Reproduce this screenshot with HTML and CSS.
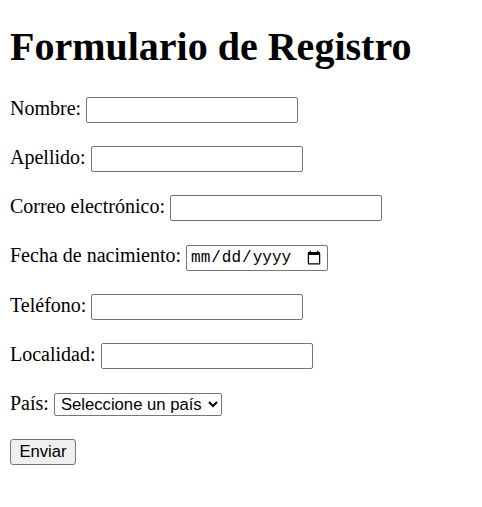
FILE: index.html
```html
<!DOCTYPE html>
<html lang="es">
<head>
<meta charset="utf-8">
<title>Formulario de Registro</title>
<link rel="stylesheet" href="styles.css">
</head>
<body>
<h1 class="title">Formulario de Registro</h1>
<form class="form">
<label for="nombre">Nombre:</label> <input class="field" type="text" id="nombre"><br><br>
<label for="apellido">Apellido:</label> <input class="field" type="text" id="apellido"><br><br>
<label for="correo">Correo electrónico:</label> <input class="field" type="email" id="correo"><br><br>
<label for="fecha">Fecha de nacimiento:</label> <input class="field date" type="date" id="fecha"><br><br>
<label for="tel">Teléfono:</label> <input class="field" type="tel" id="tel"><br><br>
<label for="loc">Localidad:</label> <input class="field" type="text" id="loc"><br><br>
<label for="pais">País:</label> <select class="select" id="pais"><option>Seleccione un país</option></select><br><br>
<input class="button" type="submit" value="Enviar">
</form>
</body>
</html>
```
FILE: styles.css
```css
body {
  margin: 10px;
  font-family: "Liberation Serif", "Times New Roman", serif;
  font-size: 20px;
  color: #000;
  background: #fff;
}
.title {
  font-family: "Liberation Serif", "Times New Roman", serif;
  font-size: 40px;
  font-weight: bold;
  margin: 12.8px 0 27.5px;
}
.field {
  box-sizing: border-box;
  width: 212px;
  height: 26px;
  padding: 0 2.5px;
  border: 1px solid #767676;
  border-radius: 2px;
  font-family: "Liberation Sans", Arial, sans-serif;
  font-size: 16.67px;
  background: #fff;
  color: #000;
}
.date {
  width: 142px;
  padding: 0 3px 0 3px;
  font-family: "Liberation Mono", "Courier New", monospace;
  font-size: 16px;
}
.select {
  box-sizing: border-box;
  width: 168px;
  height: 23px;
  padding: 0 0 0 2px;
  border: 1px solid #767676;
  border-radius: 2px;
  font-family: "Liberation Sans", Arial, sans-serif;
  font-size: 16.67px;
  background: #fff;
  color: #000;
}
.button {
  box-sizing: border-box;
  width: 66px;
  height: 26px;
  padding: 0 7px;
  border: 1px solid #767676;
  border-radius: 3px;
  font-family: "Liberation Sans", Arial, sans-serif;
  font-size: 16.67px;
  background: #efefef;
  color: #000;
}
```
